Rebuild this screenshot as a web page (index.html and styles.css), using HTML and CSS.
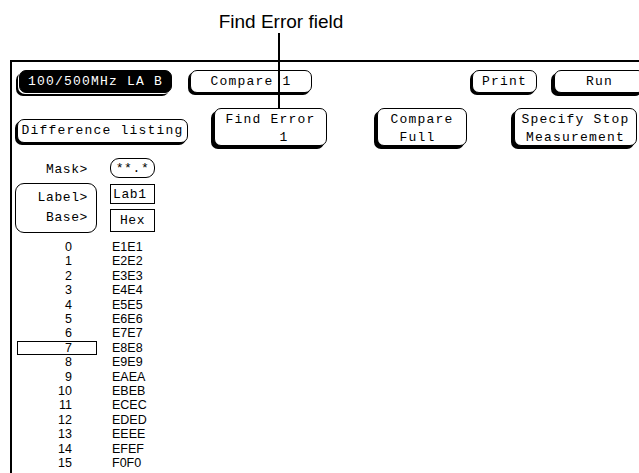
FILE: index.html
```html
<!DOCTYPE html>
<html>
<head>
<meta charset="utf-8">
<title>Find Error field</title>
<link rel="stylesheet" href="styles.css">
</head>
<body>
<div class="page">
  <div class="title">Find Error field</div>
  <div class="leader"></div>
  <div class="frame">
    <div class="row1">
      <div class="btn inv la">100/500MHz LA B</div>
      <div class="btn cmp1">Compare 1</div>
      <div class="btn print">Print</div>
      <div class="btn heavy run">Run</div>
    </div>
    <div class="row2">
      <div class="btn diff">Difference listing</div>
      <div class="btn heavy tall find"><span class="lines">Find Error
      1</span></div>
      <div class="btn heavy tall cfull"><span class="lines">Compare
 Full</span></div>
      <div class="btn heavy tall stop"><span class="lines centered">Specify Stop
Measurement</span></div>
    </div>
    <div class="fields">
      <div class="mask-row">
        <div class="lbl-col"><span class="lbl">Mask&gt;</span></div>
        <div class="pill">**.*</div>
      </div>
      <div class="lb-row">
        <div class="lb-box">
          <span class="lbl">Label&gt;</span>
          <span class="lbl">Base&gt;</span>
        </div>
        <div class="val-col">
          <div class="val lab">Lab1</div>
          <div class="val hex">Hex</div>
        </div>
      </div>
    </div>
    <div class="list">
      <div class="num">0</div><div class="data">E1E1</div>
      <div class="num">1</div><div class="data">E2E2</div>
      <div class="num">2</div><div class="data">E3E3</div>
      <div class="num">3</div><div class="data">E4E4</div>
      <div class="num">4</div><div class="data">E5E5</div>
      <div class="num">5</div><div class="data">E6E6</div>
      <div class="num">6</div><div class="data">E7E7</div>
      <div class="num sel">7</div><div class="data">E8E8</div>
      <div class="num">8</div><div class="data">E9E9</div>
      <div class="num">9</div><div class="data">EAEA</div>
      <div class="num">10</div><div class="data">EBEB</div>
      <div class="num">11</div><div class="data">ECEC</div>
      <div class="num">12</div><div class="data">EDED</div>
      <div class="num">13</div><div class="data">EEEE</div>
      <div class="num">14</div><div class="data">EFEF</div>
      <div class="num">15</div><div class="data">F0F0</div>
    </div>
  </div>
</div>
</body>
</html>
```

FILE: styles.css
```css
html, body {
  margin: 0;
  padding: 0;
  background: #fff;
}
body {
  width: 639px;
  height: 473px;
  overflow: hidden;
  color: #000;
  font-family: "Liberation Mono", "DejaVu Sans Mono", monospace;
}
.page {
  position: relative;
  width: 639px;
  height: 473px;
  overflow: hidden;
}
.title {
  box-sizing: border-box;
  height: 60px;
  width: 562px;
  padding-top: 11px;
  text-align: center;
  font-family: "Liberation Sans", Arial, sans-serif;
  font-size: 19px;
  line-height: 22px;
}
.leader {
  position: absolute;
  left: 278px;
  top: 33px;
  width: 2px;
  height: 75px;
  background: #000;
  z-index: 2;
}
.frame {
  margin-left: 10px;
  border-top: 2px solid #000;
  border-left: 2px solid #000;
  height: 411px;
}
.btn {
  box-sizing: border-box;
  height: 23px;
  border: 1px solid #000;
  border-radius: 7px;
  box-shadow: -2px 2px 0 #000;
  background: #fff;
  display: flex;
  align-items: center;
  justify-content: center;
  white-space: pre;
  font-size: 13px;
  letter-spacing: 1.2px;
  line-height: 14px;
  flex: none;
}
.btn.heavy {
  box-shadow: -3px 3px 0 #000;
}
.btn.inv {
  background: #000;
  color: #fff;
  box-shadow: -1px 1px 0 #fff, -3px 3px 0 #000;
}
.row1 {
  display: flex;
  align-items: flex-start;
  padding-top: 8px;
  height: 23px;
}
.la { margin-left: 7px; width: 153px; }
.cmp1 { margin-left: 18px; width: 122px; }
.print { margin-left: 160px; width: 65px; }
.run { margin-left: 17px; width: 91px; }
.row2 {
  display: flex;
  align-items: flex-start;
  margin-top: 15px;
  height: 38px;
}
.diff { margin-left: 5px; margin-top: 11px; width: 171px; height: 24px; }
.tall { height: 38px; line-height: 18px; }
.find { margin-left: 26px; width: 113px; }
.cfull { margin-left: 50px; width: 90px; }
.stop { margin-left: 47px; width: 123px; }
.lines {
  display: inline-block;
  text-align: left;
  padding-top: 3px;
}
.lines.centered { text-align: center; }
.fields {
  margin-top: 12px;
  margin-left: 3px;
}
.mask-row {
  display: flex;
  height: 20px;
  gap: 13px;
}
.lbl-col {
  width: 82px;
  display: flex;
  align-items: center;
  justify-content: flex-end;
  padding-right: 9px;
  padding-top: 3px;
  box-sizing: border-box;
}
.lbl {
  font-size: 13px;
  letter-spacing: 0.6px;
  line-height: 14px;
}
.pill {
  box-sizing: border-box;
  width: 45px;
  height: 20px;
  border: 1px solid #000;
  border-radius: 9px;
  display: flex;
  align-items: center;
  justify-content: center;
  font-size: 13px;
  letter-spacing: 0.6px;
}
.lb-row {
  display: flex;
  gap: 13px;
  margin-top: 5px;
}
.lb-box {
  box-sizing: border-box;
  width: 82px;
  height: 50px;
  border: 1px solid #000;
  border-radius: 9px;
  display: flex;
  flex-direction: column;
  align-items: flex-end;
  justify-content: center;
  gap: 6px;
  padding-right: 8px;
}
.val-col {
  display: flex;
  flex-direction: column;
  gap: 5px;
  padding-top: 1px;
}
.val {
  box-sizing: border-box;
  width: 45px;
  border: 1px solid #000;
  display: flex;
  align-items: center;
  font-size: 13px;
  letter-spacing: 0.6px;
}
.lab { height: 20px; padding-left: 2px; }
.hex { height: 23px; justify-content: center; }
.list {
  display: grid;
  grid-template-columns: 80px 60px;
  column-gap: 15px;
  margin-top: 7px;
  margin-left: 5px;
  font-family: "Liberation Sans", Arial, sans-serif;
  font-size: 12.5px;
  line-height: 14.4px;
}
.num {
  text-align: right;
  padding-right: 25px;
}
.num.sel {
  box-shadow: inset 0 0 0 1px #000;
}
```
